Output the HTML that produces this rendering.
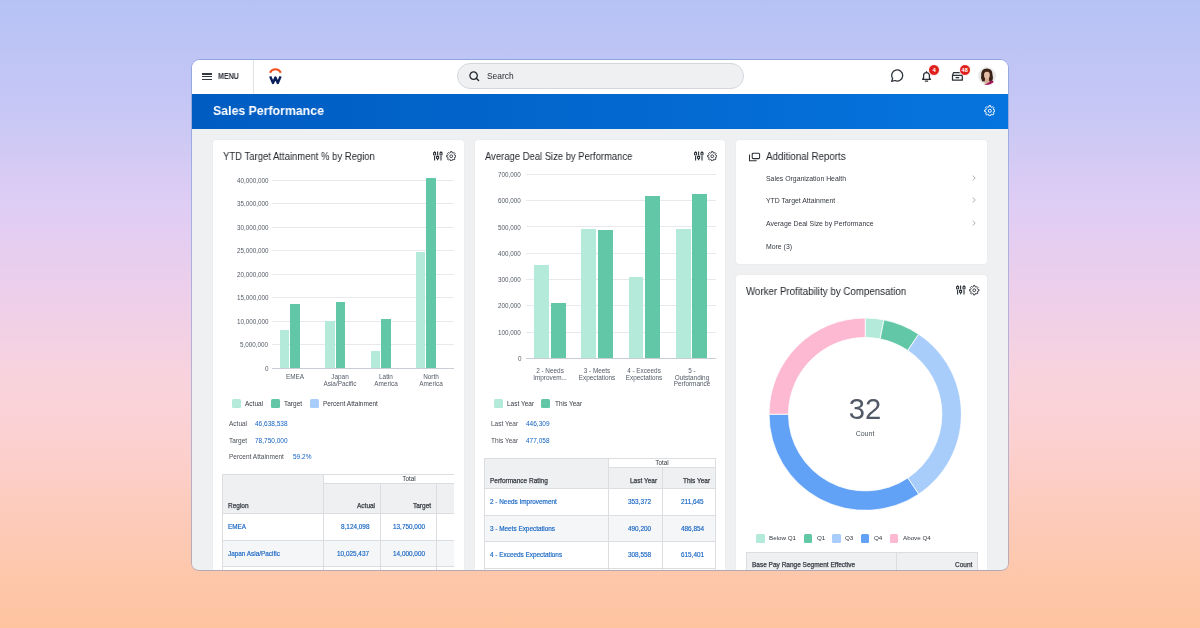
<!DOCTYPE html>
<html><head><meta charset="utf-8"><style>
html,body{margin:0;padding:0}
body{width:1200px;height:628px;overflow:hidden;position:relative;font-family:"Liberation Sans",sans-serif;
background:linear-gradient(180deg,#b6c2f5 0%,#c6c7f5 17%,#dfcdf4 33%,#eecfea 48%,#f9d3dc 61%,#fbd0cf 71%,#fdcab7 84%,#fec49f 100%)}
.win{position:absolute;left:192px;top:60px;width:816px;height:509.5px;overflow:hidden;border-radius:8px 8px 7px 7px;background:#eff0f2;box-shadow:0 0 0 0.9px rgba(70,120,190,.40)}
.t{position:absolute;white-space:nowrap;will-change:transform}
.r{position:absolute}
.card{background:#fff;border-radius:3px;box-shadow:0 0 1.2px rgba(0,0,0,.10)}
.badge{width:10.4px;height:10.4px;border-radius:50%;background:#e0201c;color:#fff;font-weight:700;text-align:center;line-height:10.4px;border:0.6px solid #fff}
</style></head><body>
<div class="win">
<div class="r" style="left:0.00px;top:0.00px;width:816.00px;height:34.00px;background:#fff;"></div>
<div class="r" style="left:10.20px;top:13.40px;width:10.00px;height:1.15px;background:#353a42;"></div>
<div class="r" style="left:10.20px;top:16.30px;width:10.00px;height:1.15px;background:#353a42;"></div>
<div class="r" style="left:10.20px;top:19.20px;width:10.00px;height:1.15px;background:#353a42;"></div>
<div class="t " style="left:26.30px;transform:scaleX(0.8214);transform-origin:0 0;top:12.00px;font-size:8.6px;line-height:8.6px;color:#30353c;font-weight:700;">MENU</div>
<div class="r" style="left:61.20px;top:0.00px;width:1.00px;height:34.00px;background:#dfe2e6;"></div>
<svg class="r" style="left:76px;top:7px" width="15" height="19" viewBox="0 0 15 19">
<path d="M1.95 5.7 A6.1 6.1 0 0 1 12.85 5.7" fill="none" stroke="#f4511e" stroke-width="2.0"/>
<path d="M2.2 9.4 L5.0 16.0 L7.4 10.6 L9.8 16.0 L12.6 9.4" fill="none" stroke="#0b1f5a" stroke-width="2.4" stroke-linejoin="round" stroke-linecap="butt"/>
</svg>
<div class="r" style="left:265.3px;top:3px;width:284.70px;height:24px;border:1px solid #d3d7dd;background:#eff0f2;border-radius:14px"></div>
<svg class="r" style="left:276.5px;top:11px" width="11" height="11" viewBox="0 0 11 11">
<circle cx="4.6" cy="4.6" r="3.7" fill="none" stroke="#22262c" stroke-width="1.3"/>
<path d="M7.3 7.3 L9.6 9.6" stroke="#22262c" stroke-width="1.4" stroke-linecap="round"/></svg>
<div class="t " style="left:294.70px;top:12.00px;font-size:8.4px;line-height:8.4px;color:#262a30;font-weight:400;">Search</div>
<svg class="r" style="left:697.5px;top:9px" width="14" height="14" viewBox="0 0 14 14">
<path d="M1.6 12.4 L2.7 9.6 A5.5 5.5 0 1 1 5.0 11.5 Z" fill="none" stroke="#2a2f36" stroke-width="1.25" stroke-linejoin="round"/></svg>
<svg class="r" style="left:728.6px;top:10px" width="11" height="13" viewBox="0 0 11 13">
<path d="M1.5 9.3 L2.6 8.0 V5.6 A2.9 2.9 0 0 1 8.4 5.6 V8.0 L9.5 9.3 Z" fill="none" stroke="#2a2f36" stroke-width="1.25" stroke-linejoin="round"/>
<path d="M4.3 11.0 H6.7" stroke="#2a2f36" stroke-width="1.25" stroke-linecap="round"/>
<path d="M5.5 1.2 V2.6" stroke="#2a2f36" stroke-width="1.2"/></svg>
<svg class="r" style="left:758.6px;top:11px" width="13" height="11" viewBox="0 0 13 11">
<path d="M2.5 1.6 H10.3 L11.3 4.4 V9.2 H1.5 V4.4 Z" fill="none" stroke="#2a2f36" stroke-width="1.25" stroke-linejoin="round"/>
<path d="M1.5 4.4 H11.3" stroke="#2a2f36" stroke-width="1.2"/>
<path d="M4.6 6.6 H8.2" stroke="#2a2f36" stroke-width="1.25"/></svg>
<div class="r badge" style="left:736.00px;top:3.60px;font-size:6px">4</div>
<div class="r badge" style="left:766.50px;top:3.60px;font-size:5.6px">48</div>
<svg class="r" style="left:786.3px;top:7.299999999999997px" width="18" height="18" viewBox="0 0 18 18">
<defs><clipPath id="ac"><circle cx="9" cy="9" r="8.9"/></clipPath></defs>
<circle cx="9" cy="9" r="8.9" fill="#e9e9ea"/>
<g clip-path="url(#ac)">
<path d="M3.2 9 Q2.6 1.8 8.8 1.4 Q14.8 1.6 14.6 8.2 Q15.6 11.6 14.4 13.6 Q12.8 15.6 11 14.2 L6.2 14.6 Q3.4 14.8 3.6 12.4 Q2.6 11 3.2 9Z" fill="#3a2217"/>
<path d="M7.2 11 L10.8 11 L11.6 16.5 L6.4 16.5Z" fill="#d6ae98"/>
<ellipse cx="8.9" cy="8.0" rx="2.9" ry="3.9" fill="#e4bda6"/>
<path d="M5.6 6.8 Q6.2 3.2 9.4 3.3 Q12.4 3.6 12.3 6.8 Q11.2 4.6 8.8 4.7 Q6.6 4.9 5.6 6.8Z" fill="#4a2c1c"/>
<path d="M5.5 19 Q6.5 16.6 8.6 16.8 Q11.5 15.6 13 13.6 Q15.6 13.4 16 15.5 L16 19Z" fill="#a01657"/>
</g></svg>
<div class="r" style="left:0.00px;top:34.00px;width:816.00px;height:34.50px;background:linear-gradient(90deg,#005cc1,#0674de);"></div>
<div class="t " style="left:20.80px;transform:scaleX(0.9410);transform-origin:0 0;top:44.00px;font-size:13.1px;line-height:13.1px;color:#fff;font-weight:700;">Sales Performance</div>
<svg class="r" style="left:791.60px;top:44.60px" width="11.6" height="11.6" viewBox="0 0 24 24">
<path fill="none" stroke="#fff" stroke-width="2.0" stroke-linejoin="round" d="M10.06 3.93 L10.31 1.33 L13.69 1.33 L13.94 3.93 L16.34 4.92 L18.35 3.26 L20.74 5.65 L19.08 7.66 L20.07 10.06 L22.67 10.31 L22.67 13.69 L20.07 13.94 L19.08 16.34 L20.74 18.35 L18.35 20.74 L16.34 19.08 L13.94 20.07 L13.69 22.67 L10.31 22.67 L10.06 20.07 L7.66 19.08 L5.65 20.74 L3.26 18.35 L4.92 16.34 L3.93 13.94 L1.33 13.69 L1.33 10.31 L3.93 10.06 L4.92 7.66 L3.26 5.65 L5.65 3.26 L7.66 4.92Z M15.20 12 A3.2 3.2 0 1 0 8.80 12 A3.2 3.2 0 1 0 15.20 12Z"/></svg>
<div class="r" style="left:0.00px;top:68.50px;width:816.00px;height:440.50px;background:#eff0f2;"></div>
<div class="r card" style="left:20.80px;top:80.00px;width:250.80px;height:460.00px"></div>
<div class="t " style="left:30.50px;transform:scaleX(0.9140);transform-origin:0 0;top:92.00px;font-size:10.4px;line-height:10.4px;color:#22262c;font-weight:400;">YTD Target Attainment % by Region</div>
<svg class="r" style="left:240.60px;top:90.50px" width="11" height="10" viewBox="0 0 11 10">
<g fill="none" stroke="#2a2f36" stroke-width="1.1">
<path d="M1.6 0.6 V1.4 M1.6 4.9 V9.4"/><rect x="0.6" y="1.4" width="2" height="2.6" rx="0.6"/>
<path d="M4.6 0.4 V4.4 M4.6 8.1 V9.3"/><path d="M3.6 5.4 H5.6 V7.2 L4.6 8.1 L3.6 7.2Z"/>
<path d="M8 0.6 V1.3 M8 4.9 V9.4"/><rect x="7" y="1.4" width="2" height="2.6" rx="0.6"/>
</g></svg>
<svg class="r" style="left:253.50px;top:90.60px" width="10.5" height="10.5" viewBox="0 0 24 24">
<path fill="none" stroke="#2a2f36" stroke-width="2.0" stroke-linejoin="round" d="M10.06 3.93 L10.31 1.33 L13.69 1.33 L13.94 3.93 L16.34 4.92 L18.35 3.26 L20.74 5.65 L19.08 7.66 L20.07 10.06 L22.67 10.31 L22.67 13.69 L20.07 13.94 L19.08 16.34 L20.74 18.35 L18.35 20.74 L16.34 19.08 L13.94 20.07 L13.69 22.67 L10.31 22.67 L10.06 20.07 L7.66 19.08 L5.65 20.74 L3.26 18.35 L4.92 16.34 L3.93 13.94 L1.33 13.69 L1.33 10.31 L3.93 10.06 L4.92 7.66 L3.26 5.65 L5.65 3.26 L7.66 4.92Z M15.20 12 A3.2 3.2 0 1 0 8.80 12 A3.2 3.2 0 1 0 15.20 12Z"/></svg>
<div class="t " style="right:739.80px;top:306.00px;font-size:6.3px;line-height:6.3px;color:#535a66;font-weight:400;">0</div>
<div class="t " style="right:739.80px;top:282.00px;font-size:6.3px;line-height:6.3px;color:#535a66;font-weight:400;">5,000,000</div>
<div class="r" style="left:80.30px;top:284.15px;width:181.70px;height:1.00px;background:#e7e9ed;"></div>
<div class="t " style="right:739.80px;top:259.00px;font-size:6.3px;line-height:6.3px;color:#535a66;font-weight:400;">10,000,000</div>
<div class="r" style="left:80.30px;top:260.70px;width:181.70px;height:1.00px;background:#e7e9ed;"></div>
<div class="t " style="right:739.80px;top:235.00px;font-size:6.3px;line-height:6.3px;color:#535a66;font-weight:400;">15,000,000</div>
<div class="r" style="left:80.30px;top:237.25px;width:181.70px;height:1.00px;background:#e7e9ed;"></div>
<div class="t " style="right:739.80px;top:212.00px;font-size:6.3px;line-height:6.3px;color:#535a66;font-weight:400;">20,000,000</div>
<div class="r" style="left:80.30px;top:213.80px;width:181.70px;height:1.00px;background:#e7e9ed;"></div>
<div class="t " style="right:739.80px;top:188.00px;font-size:6.3px;line-height:6.3px;color:#535a66;font-weight:400;">25,000,000</div>
<div class="r" style="left:80.30px;top:190.35px;width:181.70px;height:1.00px;background:#e7e9ed;"></div>
<div class="t " style="right:739.80px;top:165.00px;font-size:6.3px;line-height:6.3px;color:#535a66;font-weight:400;">30,000,000</div>
<div class="r" style="left:80.30px;top:166.90px;width:181.70px;height:1.00px;background:#e7e9ed;"></div>
<div class="t " style="right:739.80px;top:141.00px;font-size:6.3px;line-height:6.3px;color:#535a66;font-weight:400;">35,000,000</div>
<div class="r" style="left:80.30px;top:143.45px;width:181.70px;height:1.00px;background:#e7e9ed;"></div>
<div class="t " style="right:739.80px;top:118.00px;font-size:6.3px;line-height:6.3px;color:#535a66;font-weight:400;">40,000,000</div>
<div class="r" style="left:80.30px;top:120.00px;width:181.70px;height:1.00px;background:#e7e9ed;"></div>
<div class="r" style="left:87.90px;top:270.00px;width:9.30px;height:38.10px;background:#b3ead9;"></div>
<div class="r" style="left:98.20px;top:243.61px;width:9.80px;height:64.49px;background:#61c7a6;"></div>
<div class="t " style="left:103.00px;transform:translateX(-50%) ;top:314.00px;font-size:6.4px;line-height:6.4px;color:#535a66;font-weight:400;">EMEA</div>
<div class="r" style="left:133.33px;top:261.08px;width:9.30px;height:47.02px;background:#b3ead9;"></div>
<div class="r" style="left:143.63px;top:242.44px;width:9.80px;height:65.66px;background:#61c7a6;"></div>
<div class="t " style="left:148.43px;transform:translateX(-50%) ;top:314.00px;font-size:6.4px;line-height:6.4px;color:#535a66;font-weight:400;">Japan</div>
<div class="t " style="left:148.43px;transform:translateX(-50%) ;top:321.00px;font-size:6.4px;line-height:6.4px;color:#535a66;font-weight:400;">Asia/Pacific</div>
<div class="r" style="left:178.76px;top:290.56px;width:9.30px;height:17.54px;background:#b3ead9;"></div>
<div class="r" style="left:189.06px;top:258.86px;width:9.80px;height:49.25px;background:#61c7a6;"></div>
<div class="t " style="left:193.86px;transform:translateX(-50%) ;top:314.00px;font-size:6.4px;line-height:6.4px;color:#535a66;font-weight:400;">Latin</div>
<div class="t " style="left:193.86px;transform:translateX(-50%) ;top:321.00px;font-size:6.4px;line-height:6.4px;color:#535a66;font-weight:400;">America</div>
<div class="r" style="left:224.19px;top:192.02px;width:9.30px;height:116.08px;background:#b3ead9;"></div>
<div class="r" style="left:234.49px;top:117.92px;width:9.80px;height:190.18px;background:#61c7a6;"></div>
<div class="t " style="left:239.29px;transform:translateX(-50%) ;top:314.00px;font-size:6.4px;line-height:6.4px;color:#535a66;font-weight:400;">North</div>
<div class="t " style="left:239.29px;transform:translateX(-50%) ;top:321.00px;font-size:6.4px;line-height:6.4px;color:#535a66;font-weight:400;">America</div>
<div class="r" style="left:80.30px;top:307.90px;width:181.70px;height:1.30px;background:#c9cdd4;"></div>
<div class="r" style="left:40.00px;top:339.20px;width:9.00px;height:8.90px;background:#b3ead9;border-radius:1.5px"></div>
<div class="t " style="left:53.20px;top:341.00px;font-size:6.5px;line-height:6.5px;color:#33383f;font-weight:400;">Actual</div>
<div class="r" style="left:79.00px;top:339.20px;width:9.00px;height:8.90px;background:#61c7a6;border-radius:1.5px"></div>
<div class="t " style="left:92.40px;top:341.00px;font-size:6.5px;line-height:6.5px;color:#33383f;font-weight:400;">Target</div>
<div class="r" style="left:118.00px;top:339.20px;width:9.00px;height:8.90px;background:#a9cdfa;border-radius:1.5px"></div>
<div class="t " style="left:131.00px;top:341.00px;font-size:6.5px;line-height:6.5px;color:#33383f;font-weight:400;">Percent Attainment</div>
<div class="t " style="left:36.80px;top:361.00px;font-size:6.5px;line-height:6.5px;color:#494e56;font-weight:400;">Actual</div>
<div class="t " style="left:63.40px;top:361.00px;font-size:6.5px;line-height:6.5px;color:#1262c2;font-weight:400;">46,638,538</div>
<div class="t " style="left:36.80px;top:378.00px;font-size:6.5px;line-height:6.5px;color:#494e56;font-weight:400;">Target</div>
<div class="t " style="left:63.40px;top:378.00px;font-size:6.5px;line-height:6.5px;color:#1262c2;font-weight:400;">78,750,000</div>
<div class="t " style="left:36.80px;top:394.00px;font-size:6.5px;line-height:6.5px;color:#494e56;font-weight:400;">Percent Attainment</div>
<div class="t " style="left:101.00px;top:394.00px;font-size:6.5px;line-height:6.5px;color:#1262c2;font-weight:400;">59.2%</div>
<div class="r card" style="left:282.50px;top:80.00px;width:250.80px;height:460.00px"></div>
<div class="t " style="left:292.50px;transform:scaleX(0.9091);transform-origin:0 0;top:92.00px;font-size:10.4px;line-height:10.4px;color:#22262c;font-weight:400;">Average Deal Size by Performance</div>
<svg class="r" style="left:502.40px;top:90.50px" width="11" height="10" viewBox="0 0 11 10">
<g fill="none" stroke="#2a2f36" stroke-width="1.1">
<path d="M1.6 0.6 V1.4 M1.6 4.9 V9.4"/><rect x="0.6" y="1.4" width="2" height="2.6" rx="0.6"/>
<path d="M4.6 0.4 V4.4 M4.6 8.1 V9.3"/><path d="M3.6 5.4 H5.6 V7.2 L4.6 8.1 L3.6 7.2Z"/>
<path d="M8 0.6 V1.3 M8 4.9 V9.4"/><rect x="7" y="1.4" width="2" height="2.6" rx="0.6"/>
</g></svg>
<svg class="r" style="left:514.90px;top:90.60px" width="10.5" height="10.5" viewBox="0 0 24 24">
<path fill="none" stroke="#2a2f36" stroke-width="2.0" stroke-linejoin="round" d="M10.06 3.93 L10.31 1.33 L13.69 1.33 L13.94 3.93 L16.34 4.92 L18.35 3.26 L20.74 5.65 L19.08 7.66 L20.07 10.06 L22.67 10.31 L22.67 13.69 L20.07 13.94 L19.08 16.34 L20.74 18.35 L18.35 20.74 L16.34 19.08 L13.94 20.07 L13.69 22.67 L10.31 22.67 L10.06 20.07 L7.66 19.08 L5.65 20.74 L3.26 18.35 L4.92 16.34 L3.93 13.94 L1.33 13.69 L1.33 10.31 L3.93 10.06 L4.92 7.66 L3.26 5.65 L5.65 3.26 L7.66 4.92Z M15.20 12 A3.2 3.2 0 1 0 8.80 12 A3.2 3.2 0 1 0 15.20 12Z"/></svg>
<div class="t " style="right:486.80px;top:296.00px;font-size:6.3px;line-height:6.3px;color:#535a66;font-weight:400;">0</div>
<div class="t " style="right:486.80px;top:270.00px;font-size:6.3px;line-height:6.3px;color:#535a66;font-weight:400;">100,000</div>
<div class="r" style="left:334.00px;top:271.50px;width:190.40px;height:1.00px;background:#e7e9ed;"></div>
<div class="t " style="right:486.80px;top:243.00px;font-size:6.3px;line-height:6.3px;color:#535a66;font-weight:400;">200,000</div>
<div class="r" style="left:334.00px;top:245.20px;width:190.40px;height:1.00px;background:#e7e9ed;"></div>
<div class="t " style="right:486.80px;top:217.00px;font-size:6.3px;line-height:6.3px;color:#535a66;font-weight:400;">300,000</div>
<div class="r" style="left:334.00px;top:218.90px;width:190.40px;height:1.00px;background:#e7e9ed;"></div>
<div class="t " style="right:486.80px;top:191.00px;font-size:6.3px;line-height:6.3px;color:#535a66;font-weight:400;">400,000</div>
<div class="r" style="left:334.00px;top:192.60px;width:190.40px;height:1.00px;background:#e7e9ed;"></div>
<div class="t " style="right:486.80px;top:165.00px;font-size:6.3px;line-height:6.3px;color:#535a66;font-weight:400;">500,000</div>
<div class="r" style="left:334.00px;top:166.30px;width:190.40px;height:1.00px;background:#e7e9ed;"></div>
<div class="t " style="right:486.80px;top:138.00px;font-size:6.3px;line-height:6.3px;color:#535a66;font-weight:400;">600,000</div>
<div class="r" style="left:334.00px;top:140.00px;width:190.40px;height:1.00px;background:#e7e9ed;"></div>
<div class="t " style="right:486.80px;top:112.00px;font-size:6.3px;line-height:6.3px;color:#535a66;font-weight:400;">700,000</div>
<div class="r" style="left:334.00px;top:113.70px;width:190.40px;height:1.00px;background:#e7e9ed;"></div>
<div class="r" style="left:342.00px;top:205.36px;width:14.90px;height:92.94px;background:#b3ead9;"></div>
<div class="r" style="left:358.50px;top:242.64px;width:15.00px;height:55.66px;background:#61c7a6;"></div>
<div class="t " style="left:357.60px;transform:translateX(-50%) ;top:308.00px;font-size:6.4px;line-height:6.4px;color:#535a66;font-weight:400;">2 - Needs</div>
<div class="t " style="left:357.60px;transform:translateX(-50%) ;top:315.00px;font-size:6.4px;line-height:6.4px;color:#535a66;font-weight:400;">Improvem...</div>
<div class="r" style="left:389.30px;top:169.38px;width:14.90px;height:128.92px;background:#b3ead9;"></div>
<div class="r" style="left:405.80px;top:170.26px;width:15.00px;height:128.04px;background:#61c7a6;"></div>
<div class="t " style="left:404.90px;transform:translateX(-50%) ;top:308.00px;font-size:6.4px;line-height:6.4px;color:#535a66;font-weight:400;">3 - Meets</div>
<div class="t " style="left:404.90px;transform:translateX(-50%) ;top:315.00px;font-size:6.4px;line-height:6.4px;color:#535a66;font-weight:400;">Expectations</div>
<div class="r" style="left:436.60px;top:217.15px;width:14.90px;height:81.15px;background:#b3ead9;"></div>
<div class="r" style="left:453.10px;top:136.45px;width:15.00px;height:161.85px;background:#61c7a6;"></div>
<div class="t " style="left:452.20px;transform:translateX(-50%) ;top:308.00px;font-size:6.4px;line-height:6.4px;color:#535a66;font-weight:400;">4 - Exceeds</div>
<div class="t " style="left:452.20px;transform:translateX(-50%) ;top:315.00px;font-size:6.4px;line-height:6.4px;color:#535a66;font-weight:400;">Expectations</div>
<div class="r" style="left:483.90px;top:169.17px;width:14.90px;height:129.13px;background:#b3ead9;"></div>
<div class="r" style="left:500.40px;top:134.06px;width:15.00px;height:164.24px;background:#61c7a6;"></div>
<div class="t " style="left:499.50px;transform:translateX(-50%) ;top:308.00px;font-size:6.4px;line-height:6.4px;color:#535a66;font-weight:400;">5 -</div>
<div class="t " style="left:499.50px;transform:translateX(-50%) ;top:315.00px;font-size:6.4px;line-height:6.4px;color:#535a66;font-weight:400;">Outstanding</div>
<div class="t " style="left:499.50px;transform:translateX(-50%) ;top:321.00px;font-size:6.4px;line-height:6.4px;color:#535a66;font-weight:400;">Performance</div>
<div class="r" style="left:334.00px;top:298.10px;width:190.40px;height:1.30px;background:#c9cdd4;"></div>
<div class="r" style="left:302.00px;top:339.20px;width:9.00px;height:8.90px;background:#b3ead9;border-radius:1.5px"></div>
<div class="t " style="left:314.80px;top:341.00px;font-size:6.5px;line-height:6.5px;color:#33383f;font-weight:400;">Last Year</div>
<div class="r" style="left:348.50px;top:339.20px;width:9.00px;height:8.90px;background:#61c7a6;border-radius:1.5px"></div>
<div class="t " style="left:362.50px;top:341.00px;font-size:6.5px;line-height:6.5px;color:#33383f;font-weight:400;">This Year</div>
<div class="t " style="left:298.50px;top:361.00px;font-size:6.5px;line-height:6.5px;color:#494e56;font-weight:400;">Last Year</div>
<div class="t " style="left:333.50px;top:361.00px;font-size:6.5px;line-height:6.5px;color:#1262c2;font-weight:400;">446,309</div>
<div class="t " style="left:298.50px;top:378.00px;font-size:6.5px;line-height:6.5px;color:#494e56;font-weight:400;">This Year</div>
<div class="t " style="left:333.50px;top:378.00px;font-size:6.5px;line-height:6.5px;color:#1262c2;font-weight:400;">477,058</div>
<div class="r card" style="left:544.00px;top:80.00px;width:251.20px;height:123.80px"></div>
<svg class="r" style="left:556.50px;top:91.50px" width="12" height="10" viewBox="0 0 12 10">
<g fill="none" stroke="#2a2f36" stroke-width="1.05"><rect x="3.2" y="1.2" width="7.4" height="5.4" rx="1"/><path d="M0.5 2.6 V8.7 H7.6"/></g></svg>
<div class="t " style="left:574.40px;transform:scaleX(0.9378);transform-origin:0 0;top:92.00px;font-size:10.4px;line-height:10.4px;color:#22262c;font-weight:400;">Additional Reports</div>
<div class="t " style="left:574.20px;top:116.00px;font-size:6.9px;line-height:6.9px;color:#33383f;font-weight:400;">Sales Organization Health</div>
<div class="t " style="left:574.20px;top:138.00px;font-size:6.9px;line-height:6.9px;color:#33383f;font-weight:400;">YTD Target Attainment</div>
<div class="t " style="left:574.20px;top:161.00px;font-size:6.9px;line-height:6.9px;color:#33383f;font-weight:400;">Average Deal Size by Performance</div>
<div class="t " style="left:574.20px;top:184.00px;font-size:6.9px;line-height:6.9px;color:#33383f;font-weight:400;">More (3)</div>
<svg class="r" style="left:779.50px;top:114.80px" width="4" height="6" viewBox="0 0 4 6"><path d="M0.8 0.6 L3.2 3 L0.8 5.4" fill="none" stroke="#a3a6ab" stroke-width="0.9"/></svg>
<svg class="r" style="left:779.50px;top:137.30px" width="4" height="6" viewBox="0 0 4 6"><path d="M0.8 0.6 L3.2 3 L0.8 5.4" fill="none" stroke="#a3a6ab" stroke-width="0.9"/></svg>
<svg class="r" style="left:779.50px;top:159.60px" width="4" height="6" viewBox="0 0 4 6"><path d="M0.8 0.6 L3.2 3 L0.8 5.4" fill="none" stroke="#a3a6ab" stroke-width="0.9"/></svg>
<div class="r card" style="left:544.00px;top:215.00px;width:251.20px;height:325.00px"></div>
<div class="t " style="left:553.70px;transform:scaleX(0.9380);transform-origin:0 0;top:227.00px;font-size:10.4px;line-height:10.4px;color:#22262c;font-weight:400;">Worker Profitability by Compensation</div>
<svg class="r" style="left:764.40px;top:225.00px" width="11" height="10" viewBox="0 0 11 10">
<g fill="none" stroke="#2a2f36" stroke-width="1.1">
<path d="M1.6 0.6 V1.4 M1.6 4.9 V9.4"/><rect x="0.6" y="1.4" width="2" height="2.6" rx="0.6"/>
<path d="M4.6 0.4 V4.4 M4.6 8.1 V9.3"/><path d="M3.6 5.4 H5.6 V7.2 L4.6 8.1 L3.6 7.2Z"/>
<path d="M8 0.6 V1.3 M8 4.9 V9.4"/><rect x="7" y="1.4" width="2" height="2.6" rx="0.6"/>
</g></svg>
<svg class="r" style="left:777.20px;top:225.30px" width="10.5" height="10.5" viewBox="0 0 24 24">
<path fill="none" stroke="#2a2f36" stroke-width="2.0" stroke-linejoin="round" d="M10.06 3.93 L10.31 1.33 L13.69 1.33 L13.94 3.93 L16.34 4.92 L18.35 3.26 L20.74 5.65 L19.08 7.66 L20.07 10.06 L22.67 10.31 L22.67 13.69 L20.07 13.94 L19.08 16.34 L20.74 18.35 L18.35 20.74 L16.34 19.08 L13.94 20.07 L13.69 22.67 L10.31 22.67 L10.06 20.07 L7.66 19.08 L5.65 20.74 L3.26 18.35 L4.92 16.34 L3.93 13.94 L1.33 13.69 L1.33 10.31 L3.93 10.06 L4.92 7.66 L3.26 5.65 L5.65 3.26 L7.66 4.92Z M15.20 12 A3.2 3.2 0 1 0 8.80 12 A3.2 3.2 0 1 0 15.20 12Z"/></svg>
<svg class="r" style="left:576.80px;top:257.80px" width="192.4" height="192.4" viewBox="0 0 192.4 192.4"><path d="M96.20 0.00 A96.2 96.2 0 0 1 114.97 1.85 L111.16 20.97 A76.7 76.7 0 0 0 96.20 19.50Z" fill="#b3ead9" stroke="#fff" stroke-width="0.8"/><path d="M114.97 1.85 A96.2 96.2 0 0 1 149.65 16.21 L138.81 32.43 A76.7 76.7 0 0 0 111.16 20.97Z" fill="#61c7a6" stroke="#fff" stroke-width="0.8"/><path d="M149.65 16.21 A96.2 96.2 0 0 1 149.65 176.19 L138.81 159.97 A76.7 76.7 0 0 0 138.81 32.43Z" fill="#a9cdfa" stroke="#fff" stroke-width="0.8"/><path d="M149.65 176.19 A96.2 96.2 0 0 1 0.00 96.20 L19.50 96.20 A76.7 76.7 0 0 0 138.81 159.97Z" fill="#62a2f6" stroke="#fff" stroke-width="0.8"/><path d="M0.00 96.20 A96.2 96.2 0 0 1 96.20 0.00 L96.20 19.50 A76.7 76.7 0 0 0 19.50 96.20Z" fill="#fdb9d1" stroke="#fff" stroke-width="0.8"/></svg>
<div class="t " style="left:673.20px;transform:translateX(-50%) ;top:335.00px;font-size:29.2px;line-height:29.2px;color:#505965;font-weight:400;">32</div>
<div class="t " style="left:673.20px;transform:translateX(-50%) ;top:370.00px;font-size:7.0px;line-height:7.0px;color:#4b535e;font-weight:400;">Count</div>
<div class="r" style="left:564.00px;top:474.40px;width:8.60px;height:8.50px;background:#b3ead9;border-radius:1.5px"></div>
<div class="t " style="left:576.75px;top:475.00px;font-size:6.25px;line-height:6.25px;color:#33383f;font-weight:400;">Below Q1</div>
<div class="r" style="left:611.50px;top:474.40px;width:8.60px;height:8.50px;background:#61c7a6;border-radius:1.5px"></div>
<div class="t " style="left:624.50px;top:475.00px;font-size:6.25px;line-height:6.25px;color:#33383f;font-weight:400;">Q1</div>
<div class="r" style="left:640.30px;top:474.40px;width:8.60px;height:8.50px;background:#a9cdfa;border-radius:1.5px"></div>
<div class="t " style="left:653.20px;top:475.00px;font-size:6.25px;line-height:6.25px;color:#33383f;font-weight:400;">Q3</div>
<div class="r" style="left:668.80px;top:474.40px;width:8.60px;height:8.50px;background:#62a2f6;border-radius:1.5px"></div>
<div class="t " style="left:681.75px;top:475.00px;font-size:6.25px;line-height:6.25px;color:#33383f;font-weight:400;">Q4</div>
<div class="r" style="left:697.60px;top:474.40px;width:8.60px;height:8.50px;background:#fdb9d1;border-radius:1.5px"></div>
<div class="t " style="left:710.50px;top:475.00px;font-size:6.25px;line-height:6.25px;color:#33383f;font-weight:400;">Above Q4</div>
<div class="r" style="left:30.50px;top:414.40px;width:231.30px;height:38.90px;background:#eff0f2;"></div>
<div class="r" style="left:131.30px;top:414.40px;width:130.50px;height:8.90px;background:#fff;"></div>
<div class="r" style="left:30.50px;top:480.00px;width:231.30px;height:26.50px;background:#f5f6f8;"></div>
<div class="r" style="left:30.50px;top:414.40px;width:231.30px;height:1.00px;background:#dcdde0;"></div>
<div class="r" style="left:131.30px;top:422.80px;width:130.50px;height:1.00px;background:#dcdde0;"></div>
<div class="r" style="left:30.50px;top:452.70px;width:231.30px;height:1.20px;background:#dcdde0;"></div>
<div class="r" style="left:30.50px;top:479.50px;width:231.30px;height:1.00px;background:#dcdde0;"></div>
<div class="r" style="left:30.50px;top:506.00px;width:231.30px;height:1.00px;background:#dcdde0;"></div>
<div class="r" style="left:30.50px;top:532.50px;width:231.30px;height:1.00px;background:#dcdde0;"></div>
<div class="r" style="left:30.00px;top:414.40px;width:1.00px;height:225.60px;background:#dcdde0;"></div>
<div class="r" style="left:130.80px;top:414.40px;width:1.00px;height:225.60px;background:#dcdde0;"></div>
<div class="r" style="left:188.10px;top:423.30px;width:1.00px;height:216.70px;background:#dcdde0;"></div>
<div class="r" style="left:244.00px;top:423.30px;width:1.00px;height:216.70px;background:#dcdde0;"></div>
<div class="t " style="left:217.20px;transform:translateX(-50%) ;top:416.00px;font-size:6.4px;line-height:6.4px;color:#33383f;font-weight:400;">Total</div>
<div class="t " style="left:35.70px;top:443.00px;font-size:6.5px;line-height:6.5px;color:#33383f;font-weight:400;-webkit-text-stroke:0.25px #3a3f47;">Region</div>
<div class="t " style="right:632.90px;top:443.00px;font-size:6.5px;line-height:6.5px;color:#33383f;font-weight:400;-webkit-text-stroke:0.25px #3a3f47;">Actual</div>
<div class="t " style="right:577.00px;top:443.00px;font-size:6.5px;line-height:6.5px;color:#33383f;font-weight:400;-webkit-text-stroke:0.25px #3a3f47;">Target</div>
<div class="t " style="left:35.70px;top:464.00px;font-size:6.4px;line-height:6.4px;color:#1262c2;font-weight:400;-webkit-text-stroke:0.15px #1565c2;">EMEA</div>
<div class="t " style="right:638.90px;top:464.00px;font-size:6.4px;line-height:6.4px;color:#1262c2;font-weight:400;-webkit-text-stroke:0.15px #1565c2;">8,124,098</div>
<div class="t " style="right:583.00px;top:464.00px;font-size:6.4px;line-height:6.4px;color:#1262c2;font-weight:400;-webkit-text-stroke:0.15px #1565c2;">13,750,000</div>
<div class="t " style="left:35.70px;top:491.00px;font-size:6.4px;line-height:6.4px;color:#1262c2;font-weight:400;-webkit-text-stroke:0.15px #1565c2;">Japan Asia/Pacific</div>
<div class="t " style="right:638.90px;top:491.00px;font-size:6.4px;line-height:6.4px;color:#1262c2;font-weight:400;-webkit-text-stroke:0.15px #1565c2;">10,025,437</div>
<div class="t " style="right:583.00px;top:491.00px;font-size:6.4px;line-height:6.4px;color:#1262c2;font-weight:400;-webkit-text-stroke:0.15px #1565c2;">14,000,000</div>
<div class="r" style="left:292.40px;top:397.60px;width:231.20px;height:30.80px;background:#eff0f2;"></div>
<div class="r" style="left:416.60px;top:397.60px;width:107.00px;height:10.00px;background:#fff;"></div>
<div class="r" style="left:292.40px;top:455.40px;width:231.20px;height:26.20px;background:#f5f6f8;"></div>
<div class="r" style="left:292.40px;top:397.60px;width:231.20px;height:1.00px;background:#dcdde0;"></div>
<div class="r" style="left:416.60px;top:407.10px;width:107.00px;height:1.00px;background:#dcdde0;"></div>
<div class="r" style="left:292.40px;top:427.80px;width:231.20px;height:1.20px;background:#dcdde0;"></div>
<div class="r" style="left:292.40px;top:454.90px;width:231.20px;height:1.00px;background:#dcdde0;"></div>
<div class="r" style="left:292.40px;top:481.10px;width:231.20px;height:1.00px;background:#dcdde0;"></div>
<div class="r" style="left:292.40px;top:507.90px;width:231.20px;height:1.00px;background:#dcdde0;"></div>
<div class="r" style="left:291.90px;top:397.60px;width:1.00px;height:242.40px;background:#dcdde0;"></div>
<div class="r" style="left:416.10px;top:397.60px;width:1.00px;height:242.40px;background:#dcdde0;"></div>
<div class="r" style="left:469.90px;top:407.60px;width:1.00px;height:232.40px;background:#dcdde0;"></div>
<div class="r" style="left:523.10px;top:397.60px;width:1.00px;height:242.40px;background:#dcdde0;"></div>
<div class="t " style="left:470.10px;transform:translateX(-50%) ;top:400.00px;font-size:6.4px;line-height:6.4px;color:#33383f;font-weight:400;">Total</div>
<div class="t " style="left:297.60px;top:418.00px;font-size:6.5px;line-height:6.5px;color:#33383f;font-weight:400;-webkit-text-stroke:0.25px #3a3f47;">Performance Rating</div>
<div class="t " style="right:351.10px;top:418.00px;font-size:6.5px;line-height:6.5px;color:#33383f;font-weight:400;-webkit-text-stroke:0.25px #3a3f47;">Last Year</div>
<div class="t " style="right:297.90px;top:418.00px;font-size:6.5px;line-height:6.5px;color:#33383f;font-weight:400;-webkit-text-stroke:0.25px #3a3f47;">This Year</div>
<div class="t " style="left:297.60px;top:439.00px;font-size:6.4px;line-height:6.4px;color:#1262c2;font-weight:400;-webkit-text-stroke:0.15px #1565c2;">2 - Needs Improvement</div>
<div class="t " style="right:357.10px;top:439.00px;font-size:6.4px;line-height:6.4px;color:#1262c2;font-weight:400;-webkit-text-stroke:0.15px #1565c2;">353,372</div>
<div class="t " style="right:303.90px;top:439.00px;font-size:6.4px;line-height:6.4px;color:#1262c2;font-weight:400;-webkit-text-stroke:0.15px #1565c2;">211,645</div>
<div class="t " style="left:297.60px;top:466.00px;font-size:6.4px;line-height:6.4px;color:#1262c2;font-weight:400;-webkit-text-stroke:0.15px #1565c2;">3 - Meets Expectations</div>
<div class="t " style="right:357.10px;top:466.00px;font-size:6.4px;line-height:6.4px;color:#1262c2;font-weight:400;-webkit-text-stroke:0.15px #1565c2;">490,200</div>
<div class="t " style="right:303.90px;top:466.00px;font-size:6.4px;line-height:6.4px;color:#1262c2;font-weight:400;-webkit-text-stroke:0.15px #1565c2;">486,854</div>
<div class="t " style="left:297.60px;top:492.00px;font-size:6.4px;line-height:6.4px;color:#1262c2;font-weight:400;-webkit-text-stroke:0.15px #1565c2;">4 - Exceeds Expectations</div>
<div class="t " style="right:357.10px;top:492.00px;font-size:6.4px;line-height:6.4px;color:#1262c2;font-weight:400;-webkit-text-stroke:0.15px #1565c2;">308,558</div>
<div class="t " style="right:303.90px;top:492.00px;font-size:6.4px;line-height:6.4px;color:#1262c2;font-weight:400;-webkit-text-stroke:0.15px #1565c2;">615,401</div>
<div class="r" style="left:554.25px;top:491.50px;width:231.25px;height:48.50px;background:#eff0f2;"></div>
<div class="r" style="left:554.25px;top:491.50px;width:231.25px;height:1.00px;background:#dcdde0;"></div>
<div class="r" style="left:553.75px;top:491.50px;width:1.00px;height:48.50px;background:#dcdde0;"></div>
<div class="r" style="left:785.00px;top:491.50px;width:1.00px;height:48.50px;background:#dcdde0;"></div>
<div class="r" style="left:703.75px;top:491.50px;width:1.00px;height:48.50px;background:#dcdde0;"></div>
<div class="t " style="left:559.50px;top:502.00px;font-size:6.5px;line-height:6.5px;color:#33383f;font-weight:400;-webkit-text-stroke:0.25px #3a3f47;">Base Pay Range Segment Effective</div>
<div class="t " style="right:36.10px;top:502.00px;font-size:6.5px;line-height:6.5px;color:#33383f;font-weight:400;-webkit-text-stroke:0.25px #3a3f47;">Count</div>
</div>
</body></html>
